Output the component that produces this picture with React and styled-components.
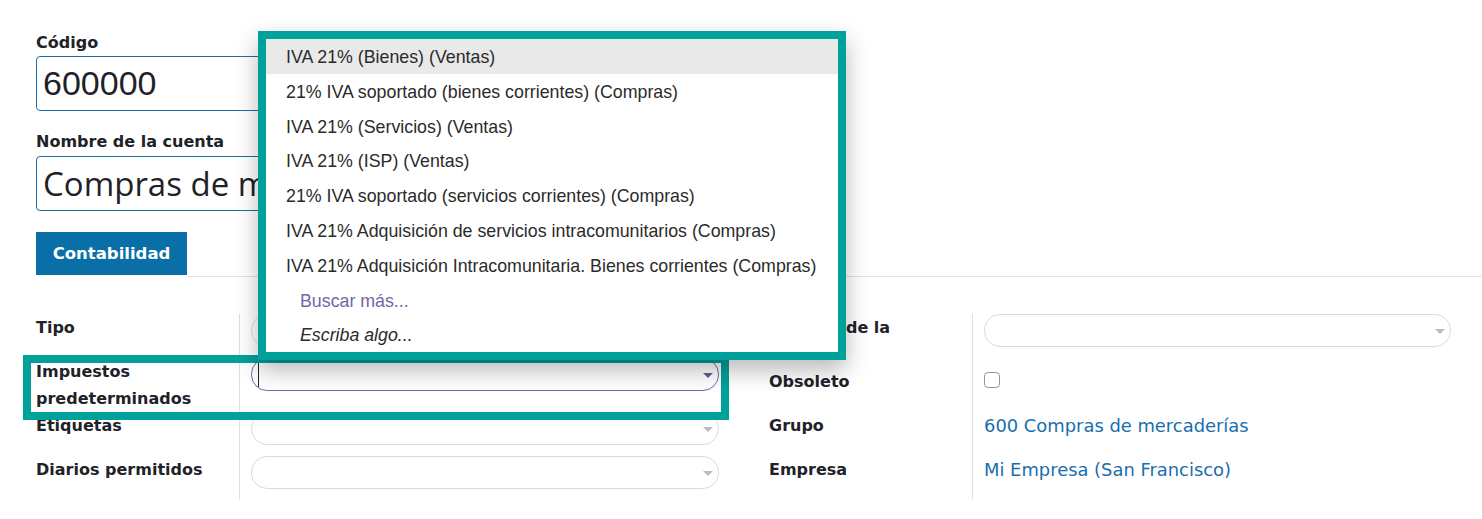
import React from "react";
import styled, { createGlobalStyle } from "styled-components";

const GlobalStyle = createGlobalStyle`
  html, body { margin: 0; padding: 0; background: #fff; }
  body { font-family: "DejaVu Sans", sans-serif; color: #1f2229; }
  * { box-sizing: border-box; }
`;

const TEAL = "#00a19b";
const UI = `"DejaVu Sans", "Open Sans", sans-serif`;
const TITLE = `"Open Sans", "DejaVu Sans", sans-serif`;
const MENU = `"Liberation Sans", Arial, sans-serif`;

const Page = styled.div`
  position: relative;
  width: 1482px;
  height: 519px;
  overflow: hidden;
  padding: 31px 31px 0 36px;
`;

const FieldLabel = styled.div`
  font-family: ${UI};
  font-weight: 700;
  font-size: 16px;
  line-height: 24px;
  color: #1f2229;
  margin: ${(p) => (p.$first ? "0" : "19px")} 0 ${(p) => (p.$first ? 1 : 2)}px;
`;

const TitleInput = styled.div`
  width: 520px;
  height: 55px;
  border: 1px solid #1b6fa8;
  border-radius: 4px;
  padding: 0 6px;
  display: flex;
  align-items: center;
  font-family: ${(p) => (p.$mono ? MENU : TITLE)};
  font-size: ${(p) => (p.$mono ? 34 : 33)}px;
  color: #1f2229;
  white-space: nowrap;
  overflow: hidden;
`;

const Tabs = styled.div`
  display: flex;
  margin: 21px -31px 0 0;
  border-bottom: 1px solid #e1e3e6;
`;

const Tab = styled.div`
  height: 45px;
  width: 151px;
  text-align: center;
  background: #0b6fa7;
  border-bottom: 2px solid #fff;
  margin-bottom: -1px;
  color: #fff;
  font-family: ${UI};
  font-weight: 700;
  font-size: 16.5px;
  line-height: 43px;
`;

const Groups = styled.div`
  display: grid;
  grid-template-columns: 683px 682px;
  column-gap: 50px;
  margin-top: 37px;
`;

const Group = styled.div`
  display: grid;
  grid-template-columns: ${(p) => p.$label}px 1fr;
  align-content: start;
`;

const Label = styled.div`
  font-family: ${UI};
  font-weight: 700;
  font-size: 16px;
  line-height: 27px;
  color: #1f2229;
  padding-right: 22px;
  border-right: 1px solid #dcdfe3;
`;

const Value = styled.div`
  padding: 0 0 11px 11px;
  min-height: 44px;
  font-family: ${UI};
  font-size: 17.9px;
  line-height: 27px;
`;

const Select = styled.div`
  position: relative;
  height: 33px;
  border: 1px solid ${(p) => (p.$focus ? "#7a68a6" : "#d9dbde")};
  border-radius: 16px;
  display: flex;
  align-items: center;
  padding-left: 6px;
`;

const Caret = styled.span`
  position: absolute;
  right: 5px;
  top: 14px;
  width: 0;
  height: 0;
  border-left: 5px solid transparent;
  border-right: 5px solid transparent;
  border-top: 5px solid ${(p) => (p.$focus ? "#6c5c96" : "#b9bcc1")};
`;

const TextCursor = styled.span`
  width: 1px;
  height: 25px;
  background: #222;
`;

const Checkbox = styled.span`
  display: block;
  margin-top: 4px;
  width: 16px;
  height: 16px;
  border: 1px solid #8f95a8;
  border-radius: 4px;
`;

const Link = styled.span`
  color: #1a6ead;
`;

const Menu = styled.ul`
  position: absolute;
  left: 258px;
  top: 31px;
  width: 588px;
  margin: 0;
  padding: 0;
  list-style: none;
  background: #fff;
  border: 8px solid ${TEAL};
  box-shadow: 0 10px 22px rgba(0, 0, 0, 0.28);
  z-index: 3;
`;

const Item = styled.li`
  height: 34.8px;
  padding-top: 3px;
  line-height: 31.8px;
  padding-left: ${(p) => (p.$extra ? 34 : 20)}px;
  font-family: ${MENU};
  font-size: 17.8px;
  white-space: nowrap;
  color: ${(p) => (p.$more ? "#7466a8" : "#2b2b2b")};
  font-style: ${(p) => (p.$italic ? "italic" : "normal")};
  background: ${(p) => (p.$active ? "#e9e9e9" : "transparent")};
`;

const Highlight = styled.div`
  position: absolute;
  left: 23px;
  top: 355px;
  width: 706px;
  height: 65px;
  border: 8px solid ${TEAL};
  z-index: 2;
  pointer-events: none;
`;

const options = [
  "IVA 21% (Bienes) (Ventas)",
  "21% IVA soportado (bienes corrientes) (Compras)",
  "IVA 21% (Servicios) (Ventas)",
  "IVA 21% (ISP) (Ventas)",
  "21% IVA soportado (servicios corrientes) (Compras)",
  "IVA 21% Adquisición de servicios intracomunitarios (Compras)",
  "IVA 21% Adquisición Intracomunitaria. Bienes corrientes (Compras)",
];

export default function App() {
  return (
    <>
      <GlobalStyle />
      <Page>
        <FieldLabel $first>Código</FieldLabel>
        <TitleInput $mono>600000</TitleInput>
        <FieldLabel>Nombre de la cuenta</FieldLabel>
        <TitleInput>Compras de mercaderías</TitleInput>

        <Tabs>
          <Tab>Contabilidad</Tab>
        </Tabs>

        <Groups>
          <Group $label={204}>
            <Label>Tipo</Label>
            <Value>
              <Select>
                <Caret />
              </Select>
            </Value>
            <Label>Impuestos predeterminados</Label>
            <Value>
              <Select $focus>
                <TextCursor />
                <Caret $focus />
              </Select>
            </Value>
            <Label>Etiquetas</Label>
            <Value>
              <Select>
                <Caret />
              </Select>
            </Value>
            <Label>Diarios permitidos</Label>
            <Value>
              <Select>
                <Caret />
              </Select>
            </Value>
          </Group>

          <Group $label={204}>
            <Label>Moneda de la cuenta</Label>
            <Value>
              <Select>
                <Caret />
              </Select>
            </Value>
            <Label>Obsoleto</Label>
            <Value>
              <Checkbox />
            </Value>
            <Label>Grupo</Label>
            <Value>
              <Link>600 Compras de mercaderías</Link>
            </Value>
            <Label>Empresa</Label>
            <Value>
              <Link>Mi Empresa (San Francisco)</Link>
            </Value>
          </Group>
        </Groups>

        <Menu>
          {options.map((o, i) => (
            <Item key={o} $active={i === 0}>
              {o}
            </Item>
          ))}
          <Item $extra $more>Buscar más...</Item>
          <Item $extra $italic>Escriba algo...</Item>
        </Menu>
        <Highlight />
      </Page>
    </>
  );
}
